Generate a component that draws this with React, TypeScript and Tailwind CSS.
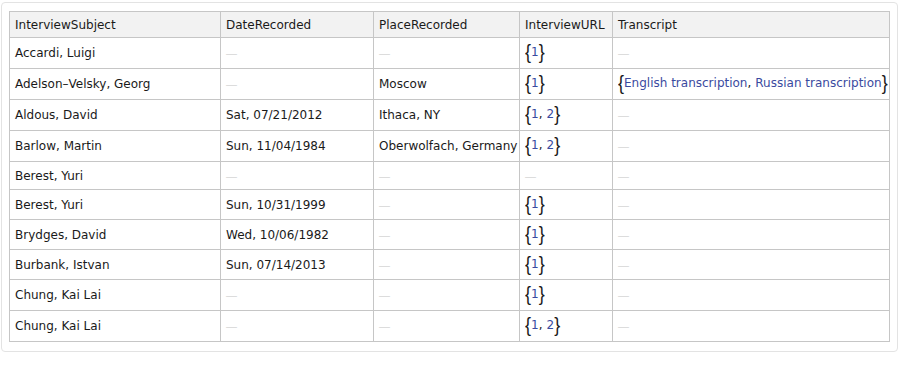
import React from "react";

type Cell = string | null | { links: string[] };

const rows: Cell[][] = [
  ["Accardi, Luigi", null, null, { links: ["1"] }, null],
  ["Adelson–Velsky, Georg", null, "Moscow", { links: ["1"] }, { links: ["English transcription", "Russian transcription"] }],
  ["Aldous, David", "Sat, 07/21/2012", "Ithaca, NY", { links: ["1", "2"] }, null],
  ["Barlow, Martin", "Sun, 11/04/1984", "Oberwolfach, Germany", { links: ["1", "2"] }, null],
  ["Berest, Yuri", null, null, null, null],
  ["Berest, Yuri", "Sun, 10/31/1999", null, { links: ["1"] }, null],
  ["Brydges, David", "Wed, 10/06/1982", null, { links: ["1"] }, null],
  ["Burbank, Istvan", "Sun, 07/14/2013", null, { links: ["1"] }, null],
  ["Chung, Kai Lai", null, null, { links: ["1"] }, null],
  ["Chung, Kai Lai", null, null, { links: ["1", "2"] }, null],
];

const rowH = ["h-[31px]", "h-[31px]", "h-[31px]", "h-[31px]", "h-[28px]", "h-[30px]", "h-[30px]", "h-[30px]", "h-[31px]", "h-[31px]"];

const headers = ["InterviewSubject", "DateRecorded", "PlaceRecorded", "InterviewURL", "Transcript"];
const widths = ["w-[211px]", "w-[153px]", "w-[146px]", "w-[93px]", "w-[277px]"];

function Brace({ ch }: { ch: string }) {
  return (
    <span className="inline-block text-[18px] leading-none text-[#1a1a1a] scale-y-[1.15] align-[-1px] [font-family:'Liberation_Sans',Arial,sans-serif]">
      {ch}
    </span>
  );
}

function CellContent({ c }: { c: Cell }) {
  if (c === null) {
    return <span className="text-[11px] text-[#d6d6d6] [font-family:'Liberation_Sans',Arial,sans-serif]">—</span>;
  }
  if (typeof c === "string") return <span>{c}</span>;
  return (
    <span className="inline-flex items-center whitespace-nowrap">
      <Brace ch="{" />
      {c.links.map((l, i) => (
        <React.Fragment key={i}>
          {i > 0 && <span className="text-[#1a1a1a] mr-[4px]">,</span>}
          <span className="text-[#3a4aa0]">{l}</span>
        </React.Fragment>
      ))}
      <Brace ch="}" />
    </span>
  );
}

export default function App() {
  return (
    <div className="bg-white w-[900px] h-[368px] pl-px pt-[2px] [font-family:'DejaVu_Sans',Verdana,sans-serif] text-[12px] text-[#1a1a1a]">
      <div className="w-[897px] border border-[#e3e3e3] rounded-[4px] pt-[8px] pl-[7px] pr-[7px] pb-[9px]">
        <table className="border-collapse w-[880px] table-fixed">
          <colgroup>
            {widths.map((w, i) => (
              <col key={i} className={w} />
            ))}
          </colgroup>
          <thead>
            <tr className="bg-[#f2f2f2]">
              {headers.map((h) => (
                <th key={h} className="h-[26px] border border-[#c6c6c6] text-left font-normal px-[5px] py-0">
                  {h}
                </th>
              ))}
            </tr>
          </thead>
          <tbody>
            {rows.map((r, ri) => (
              <tr key={ri}>
                {r.map((c, ci) => (
                  <td
                    key={ci}
                    className={`${rowH[ri]} border border-[#c6c6c6] px-[5px] py-0 align-middle whitespace-nowrap`}
                  >
                    <CellContent c={c} />
                  </td>
                ))}
              </tr>
            ))}
          </tbody>
        </table>
      </div>
    </div>
  );
}
